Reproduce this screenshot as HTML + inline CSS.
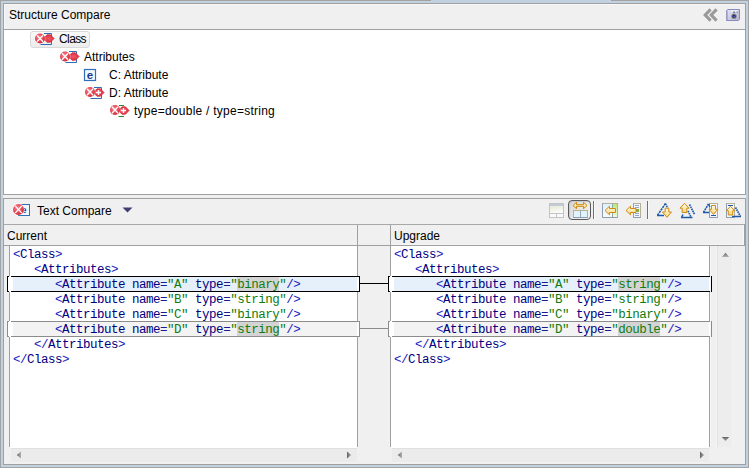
<!DOCTYPE html>
<html><head><meta charset="utf-8">
<style>
html,body{margin:0;padding:0}
body{width:749px;height:468px;position:relative;overflow:hidden;background:#c2d1df;font-family:"Liberation Sans",sans-serif;font-size:12px;color:#000}
.a{position:absolute}
.t{position:absolute;white-space:pre;line-height:12px}
.m{position:absolute;white-space:pre;font-family:"Liberation Mono",monospace;font-size:12.5px;letter-spacing:-0.5px;line-height:15px;height:15px;margin-top:2px}
.d{color:#2020c0}.e{color:#1a1a90}.n{color:#000080}.v{color:#107c10}
svg{position:absolute;overflow:visible}
</style></head><body>
<!-- outer frame -->
<div class="a" style="left:0;top:0;width:747px;height:466px;border:1px solid #a3a3a3"></div>
<div class="a" style="left:431px;top:0;width:180px;height:1px;background:#c2d1df"></div>

<!-- TOP PANE -->
<div class="a" style="left:3px;top:3px;width:741px;height:190px;border:1px solid #a0a0a0;background:#fff"></div>
<div class="a" style="left:4px;top:4px;width:741px;height:25px;background:#f0f0f0;border-bottom:1px solid #a0a0a0;width:741px"></div>
<div class="a" style="left:4px;top:4px;width:740px;height:1px;background:#f8f8f8"></div>
<div class="a" style="left:4px;top:4px;width:1px;height:25px;background:#f8f8f8"></div>
<div class="t" style="left:9px;top:9px">Structure Compare</div>


<!-- tree -->
<div class="a" style="left:30px;top:31px;width:58px;height:15px;border:1px solid #d9d9d9;border-radius:3px;background:linear-gradient(#fafafa,#ececec)"></div>
<svg width="0" height="0" style="left:0;top:0"><defs>
<radialGradient id="rg" cx="0.42" cy="0.38" r="0.7"><stop offset="0" stop-color="#f78a92"/><stop offset="0.65" stop-color="#e4404e"/><stop offset="1" stop-color="#c41c2a"/></radialGradient>
<radialGradient id="dg" cx="0.5" cy="0.5" r="0.6"><stop offset="0" stop-color="#f05868"/><stop offset="1" stop-color="#d82a3a"/></radialGradient>
<symbol id="xc" viewBox="-0.6 -0.6 11.2 11.2"><circle cx="5" cy="5" r="5.6" fill="#fff" opacity="0.85"/><circle cx="5" cy="5" r="5" fill="url(#rg)"/><path d="M1.9 1.7L8.1 8.3M8.1 1.7L1.9 8.3" stroke="#fff" stroke-width="1.25"/></symbol>
</defs></svg>
<svg style="left:35px;top:33px" width="20" height="12" viewBox="0 0 20 12">
<path d="M9 0.5H16.5V11.5H5.5" fill="none" stroke="#2e6db5" stroke-width="1"/>
<path d="M8.4 5.5L12 1.8L15.4 1.8L19.1 5.5L15.4 9.3L12 9.3Z" fill="url(#dg)" stroke="#d02432" stroke-width="0.7"/>
<use href="#xc" x="-0.6" y="-0.1" width="11.2" height="11.2"/>
</svg>
<svg style="left:60px;top:51px" width="20" height="12" viewBox="0 0 20 12">
<path d="M9 0.5H16.5V11.5H5.5" fill="none" stroke="#2e6db5" stroke-width="1"/>
<path d="M8.4 5.5L12 1.8L15.4 1.8L19.1 5.5L15.4 9.3L12 9.3Z" fill="url(#dg)" stroke="#d02432" stroke-width="0.7"/>
<use href="#xc" x="-0.6" y="-0.1" width="11.2" height="11.2"/>
</svg>
<svg style="left:84px;top:69px" width="12" height="12" viewBox="0 0 12 12">
<rect x="0.5" y="0.5" width="11" height="11" fill="#f2f9fe" stroke="#2f6fb8" stroke-width="1.2"/>
<text x="6" y="9.6" text-anchor="middle" font-family="Liberation Sans" font-weight="bold" font-size="11.5" fill="#1a3a98">e</text>
</svg>
<svg style="left:85px;top:87px" width="20" height="12" viewBox="0 0 20 12">
<path d="M9 0.5H16.5V11.5H5.5" fill="none" stroke="#2e6db5" stroke-width="1"/>
<path d="M8.4 5.5L12 1.8L15.4 1.8L19.1 5.5L15.4 9.3L12 9.3Z" fill="url(#dg)" stroke="#d02432" stroke-width="0.7"/>
<path d="M13.5 3V8M11 5.5H16" stroke="#fff" stroke-width="1.4"/>
<use href="#xc" x="-0.6" y="-0.6" width="11.2" height="11.2"/>
</svg>
<svg style="left:110px;top:105px" width="20" height="12" viewBox="0 0 20 12">
<path d="M9 0.5H14M8.5 11.5H14" fill="none" stroke="#2e8a2e" stroke-width="1"/>
<path d="M8.4 5.5L12 1.8L15.4 1.8L19.1 5.5L15.4 9.3L12 9.3Z" fill="url(#dg)" stroke="#d02432" stroke-width="0.7"/>
<path d="M13.5 3V8M11 5.5H16" stroke="#fff" stroke-width="1.4"/>
<use href="#xc" x="-0.6" y="-0.6" width="11.2" height="11.2"/>
</svg>
<div class="t" style="left:59px;top:33px;letter-spacing:-0.6px">Class</div>
<div class="t" style="left:84px;top:51px">Attributes</div>
<div class="t" style="left:109px;top:69px">C: Attribute</div>
<div class="t" style="left:109px;top:87px">D: Attribute</div>
<div class="t" style="left:134px;top:105px;letter-spacing:0.25px">type=double / type=string</div>

<!-- sash -->
<div class="a" style="left:3px;top:195px;width:743px;height:3px;background:#f0f0f0"></div>

<!-- BOTTOM PANE -->
<div class="a" style="left:3px;top:198px;width:741px;height:265px;border:1px solid #a0a0a0;background:#f0f0f0"></div>
<div class="a" style="left:4px;top:224px;width:741px;height:1px;background:#a8a8a8"></div>
<div class="t" style="left:37px;top:205px">Text Compare</div>
<div class="a" style="left:4px;top:245px;width:741px;height:1px;background:#a0a0a0"></div>
<div class="t" style="left:7px;top:230px">Current</div>
<div class="t" style="left:394px;top:230px">Upgrade</div>
<div class="a" style="left:744px;top:224px;width:1px;height:22px;background:#a0a0a0"></div>
<div class="a" style="left:743px;top:225px;width:1px;height:20px;background:#f8f8f8"></div>
<div class="a" style="left:391px;top:244px;width:352px;height:1px;background:#f6f6f6"></div>
<div class="a" style="left:357px;top:225px;width:1px;height:222px;background:#a0a0a0"></div>
<div class="a" style="left:390px;top:225px;width:1px;height:222px;background:#a0a0a0"></div>


<!-- top toolbar icons -->
<svg style="left:703px;top:8px" width="15" height="14" viewBox="0 0 15 14">
<path d="M7.6 1.4L2.2 7L7.6 12.6M13.6 1.4L8.2 7L13.6 12.6" fill="none" stroke="#9a9a9a" stroke-width="3.1" stroke-linejoin="miter"/>
</svg>
<svg style="left:725px;top:8px" width="16" height="14" viewBox="0 0 16 14">
<defs><linearGradient id="cam" x1="0" y1="0" x2="1" y2="1"><stop offset="0" stop-color="#e6e6f4"/><stop offset="1" stop-color="#b4b4d2"/></linearGradient></defs>
<path d="M1.5 2.5L2.5 1.5H14.5V11.5L13.5 12.5H1.5Z" fill="url(#cam)" stroke="#8a8ac0" stroke-width="1"/>
<path d="M2 2.5V12" stroke="#a0a0cc" stroke-width="1.4"/>
<path d="M6 3H13" stroke="#fafafa" stroke-width="1.2"/>
<circle cx="9" cy="8.3" r="2.8" fill="#8c8c98"/>
<circle cx="9" cy="8.3" r="1.8" fill="#2c2c58"/>
<circle cx="9.2" cy="8.5" r="0.8" fill="#6a6ad0"/>
<rect x="8.4" y="3.6" width="1.4" height="1.2" fill="#404050"/>
<rect x="11.6" y="3.6" width="1.6" height="1" fill="#707088"/>
</svg>

<!-- text compare toolbar -->
<svg style="left:12px;top:203px" width="19" height="14" viewBox="0 0 19 14">
<rect x="6.5" y="1.5" width="11" height="11" fill="#f0f8fe" stroke="#2f6fb8"/>
<text x="12" y="10" text-anchor="middle" font-family="Liberation Sans" font-weight="bold" font-size="9" fill="#1d3f9e">e</text>
<use href="#xc" x="0.4" y="0.4" width="12.2" height="12.2"/>
</svg>
<svg style="left:122px;top:207px" width="11" height="6" viewBox="0 0 11 6"><path d="M0.5 0.5H10.5L5.5 5.5Z" fill="#404070"/></svg>

<!-- right toolbar -->
<svg style="left:549px;top:203px" width="15" height="15" viewBox="0 0 15 15">
<defs><linearGradient id="dis" x1="0" y1="0" x2="0.3" y2="1"><stop offset="0" stop-color="#e6ead4"/><stop offset="1" stop-color="#fbfbf8"/></linearGradient></defs>
<rect x="0.5" y="0.5" width="14" height="14" fill="#f8fafc" stroke="#c4c4c4"/>
<rect x="1" y="1" width="13" height="2" fill="#c4ccd8"/>
<rect x="1" y="3" width="13" height="7" fill="url(#dis)"/>
<path d="M0.5 10.5H14.5M7.5 10.5V14.5" stroke="#c4c4c4"/>
</svg>
<div class="a" style="left:568px;top:200px;width:21px;height:18px;border:1px solid #5a5a5a;border-radius:4px;box-shadow:inset 1px 1px 1px #c8c8c8;background:linear-gradient(135deg,#d6d6d6,#f6f6f6)"></div>
<svg style="left:572px;top:202px" width="16" height="16" viewBox="0 0 16 16">
<path d="M1 3.5L4.5 0.3V2.7H11.5V0.3L15 3.5L11.5 6.7V4.3H4.5V6.7Z" fill="url(#ar)" stroke="#d08a10" stroke-width="1" stroke-linejoin="round"/>
<rect x="1.5" y="8.5" width="14" height="7" fill="#dff4fd" stroke="#b8b090"/>
<path d="M8.5 9V15.5" stroke="#9aa8b8"/>
<path d="M1.5 15.5H15.5" stroke="#8a9cb8"/>
</svg>
<div class="a" style="left:593px;top:201px;width:1px;height:18px;background:#707070;box-shadow:1px 0 0 #fafafa"></div>
<svg style="left:600px;top:200px" width="20" height="20" viewBox="0 0 20 20">
<defs><linearGradient id="lb" x1="0" y1="0" x2="0" y2="1"><stop offset="0" stop-color="#dcf2fd"/><stop offset="1" stop-color="#f8fcf4"/></linearGradient>
<linearGradient id="gr" x1="0" y1="0" x2="0" y2="1"><stop offset="0" stop-color="#bde87a"/><stop offset="1" stop-color="#eef8dc"/></linearGradient>
<linearGradient id="ar" x1="0" y1="0" x2="0" y2="1"><stop offset="0" stop-color="#fffbe6"/><stop offset="1" stop-color="#f6d77c"/></linearGradient>
<linearGradient id="arh" x1="0" y1="0" x2="1" y2="0"><stop offset="0" stop-color="#fffbe6"/><stop offset="1" stop-color="#f6d77c"/></linearGradient></defs>
<rect x="2.5" y="3.5" width="15" height="14" fill="url(#lb)" stroke="#b4b09a"/>
<path d="M2.5 3.5V17.5H17.5" fill="none" stroke="#8e9cb4"/>
<rect x="13" y="4" width="4" height="13" fill="url(#gr)"/><path d="M12.5 4V17" stroke="#8fa8a0"/>
<path d="M5 10.5L9.5 6.2V8.5H15.5V12.5H9.5V14.8Z" fill="url(#ar)" stroke="#cf8a14" stroke-width="1" stroke-linejoin="round"/>
</svg>
<svg style="left:623px;top:200px" width="20" height="20" viewBox="0 0 20 20">
<rect x="10.5" y="3.5" width="7" height="14" fill="#f2f6fc" stroke="#b4b09a"/>
<path d="M10.5 3.5V17.5H17.5" fill="none" stroke="#8e9cb4"/>
<path d="M12 5.5H16M12 7.5H16M12 13.5H16M12 15.5H16" stroke="#98a4cc"/>
<rect x="13" y="9" width="3" height="3" fill="#7cb040"/>
<path d="M3 10.5L7.5 6.2V8.5H13V12.5H7.5V14.8Z" fill="url(#ar)" stroke="#cf8a14" stroke-width="1" stroke-linejoin="round"/>
</svg>
<div class="a" style="left:647px;top:201px;width:1px;height:18px;background:#707070;box-shadow:1px 0 0 #fafafa"></div>
<svg style="left:654px;top:200px" width="20" height="20" viewBox="0 0 20 20">
<path d="M3.5 15.3L11.5 3.5" fill="none" stroke="#1e5aa8" stroke-width="1.6" stroke-dasharray="2.2 0.8"/>
<path d="M11.5 3.5L13.8 8.5" fill="none" stroke="#1e5aa8" stroke-width="1.5" stroke-dasharray="1.6 0.8"/>
<path d="M3 15.5H10" stroke="#1e5aa8" stroke-width="1.5"/>
<path d="M11.2 8.2H14.8V12H17.5L13 17.3L8.5 12H11.2Z" fill="url(#ar)" stroke="#cf8a14" stroke-width="1" stroke-linejoin="round"/>
</svg>
<svg style="left:677px;top:200px" width="20" height="20" viewBox="0 0 20 20">
<path d="M12.5 4.5L17.5 14.3" fill="none" stroke="#1e5aa8" stroke-width="1.7" stroke-dasharray="1.6 0.7"/>
<path d="M11 11L14 17" fill="none" stroke="#1e5aa8" stroke-width="1.7" stroke-dasharray="1.6 0.7"/>
<path d="M4 17.5H15.5M4.5 17.5L6 14.5" fill="none" stroke="#1e5aa8" stroke-width="1.5"/>
<path d="M7.5 3.3L12 8.2H9.8V12.5H5.2V8.2H3Z" fill="url(#ar)" stroke="#cf8a14" stroke-width="1" stroke-linejoin="round"/>
</svg>
<svg style="left:700px;top:200px" width="20" height="20" viewBox="0 0 20 20">
<rect x="9.5" y="3.5" width="8" height="14" fill="#f2f6fc" stroke="#b4b09a"/>
<path d="M9.5 3.5V17.5H17.5" fill="none" stroke="#8e9cb4"/>
<path d="M3.5 12.5L8.5 3.8" fill="none" stroke="#1e5aa8" stroke-width="1.6" stroke-dasharray="2 0.7"/>
<path d="M8.5 4L9.8 7" fill="none" stroke="#1e5aa8" stroke-width="1.4"/>
<path d="M3 12.5H9" stroke="#1e5aa8" stroke-width="1.5"/>
<path d="M11 15.5H16" stroke="#1e5aa8" stroke-width="1"/>
<path d="M11.5 5.5H15.5V9.3H17.8L13.5 14.5L9.2 9.3H11.5Z" fill="url(#ar)" stroke="#cf8a14" stroke-width="1" stroke-linejoin="round"/>
</svg>
<svg style="left:723px;top:200px" width="20" height="20" viewBox="0 0 20 20">
<rect x="3.5" y="3.5" width="8" height="14" fill="#f2f6fc" stroke="#b4b09a"/>
<path d="M3.5 3.5V17.5H11.5" fill="none" stroke="#8e9cb4"/>
<path d="M5 5.5H10" stroke="#1e5aa8" stroke-width="1"/>
<path d="M12.5 7.5L17.5 16.5" fill="none" stroke="#1e5aa8" stroke-width="1.7" stroke-dasharray="1.6 0.7"/>
<path d="M9 16.5H18" stroke="#1e5aa8" stroke-width="1.5"/>
<path d="M7.5 6.3L11.8 10.8H9.7V15H5.3V10.8H3.2Z" fill="url(#ar)" stroke="#cf8a14" stroke-width="1" stroke-linejoin="round"/>
</svg>

<!-- left text pane -->
<div class="a" style="left:10px;top:246px;width:347px;height:202px;background:#fff"></div>
<div class="a" style="left:9px;top:246px;width:1px;height:201px;background:#a0a0a0"></div>
<!-- right text pane -->
<div class="a" style="left:391px;top:246px;width:318px;height:202px;background:#fff"></div>
<div class="a" style="left:709px;top:246px;width:1px;height:201px;background:#a0a0a0"></div>


<!-- diff boxes -->
<div class="a" style="left:13px;top:277px;width:346px;height:14px;background:#e6f0fb"></div>
<div class="a" style="left:7px;top:276px;width:351px;height:14px;border:1px solid #000;border-left-width:1px"></div>
<div class="a" style="left:9px;top:276px;width:2px;height:1px;background:#fff"></div>
<div class="a" style="left:9px;top:291px;width:2px;height:1px;background:#fff"></div>
<div class="a" style="left:8px;top:277px;width:5px;height:14px;background:#fff"></div>
<div class="a" style="left:357px;top:277px;width:2px;height:14px;background:#fff"></div>
<div class="a" style="left:360px;top:283px;width:28px;height:1px;background:#000"></div>
<div class="a" style="left:394px;top:277px;width:315px;height:14px;background:#e6f0fb"></div>
<div class="a" style="left:388px;top:276px;width:322px;height:14px;border:1px solid #000"></div>
<div class="a" style="left:390px;top:276px;width:2px;height:1px;background:#fff"></div>
<div class="a" style="left:390px;top:291px;width:2px;height:1px;background:#fff"></div>
<div class="a" style="left:389px;top:277px;width:5px;height:14px;background:#fff"></div>
<div class="a" style="left:709px;top:277px;width:2px;height:14px;background:#fff"></div>

<div class="a" style="left:13px;top:322px;width:346px;height:14px;background:#f3f3f3"></div>
<div class="a" style="left:7px;top:321px;width:351px;height:14px;border:1px solid #8c8c8c"></div>
<div class="a" style="left:9px;top:321px;width:2px;height:1px;background:#fff"></div>
<div class="a" style="left:9px;top:336px;width:2px;height:1px;background:#fff"></div>
<div class="a" style="left:8px;top:322px;width:5px;height:14px;background:#fff"></div>
<div class="a" style="left:357px;top:322px;width:2px;height:14px;background:#fff"></div>
<div class="a" style="left:360px;top:328px;width:28px;height:1px;background:#8c8c8c"></div>
<div class="a" style="left:394px;top:322px;width:315px;height:14px;background:#f3f3f3"></div>
<div class="a" style="left:388px;top:321px;width:322px;height:14px;border:1px solid #8c8c8c"></div>
<div class="a" style="left:390px;top:321px;width:2px;height:1px;background:#fff"></div>
<div class="a" style="left:390px;top:336px;width:2px;height:1px;background:#fff"></div>
<div class="a" style="left:389px;top:322px;width:5px;height:14px;background:#fff"></div>
<div class="a" style="left:709px;top:322px;width:2px;height:14px;background:#fff"></div>

<!-- word highlights -->
<div class="a" style="left:237px;top:277px;width:42px;height:14px;background:#d4d4d4"></div>
<div class="a" style="left:237px;top:322px;width:42px;height:14px;background:#d4d4d4"></div>
<div class="a" style="left:618px;top:277px;width:42px;height:14px;background:#d4d4d4"></div>
<div class="a" style="left:618px;top:322px;width:42px;height:14px;background:#d4d4d4"></div>

<!-- code right -->
<div class="m" style="left:394px;top:246px"><span class="d">&lt;</span><span class="n">Class</span><span class="d">&gt;</span></div>
<div class="m" style="left:394px;top:261px">   <span class="d">&lt;</span><span class="n">Attributes</span><span class="d">&gt;</span></div>
<div class="m" style="left:394px;top:276px">      <span class="d">&lt;</span><span class="n">Attribute name</span><span class="e">=</span><span class="v">"A"</span> <span class="n">type</span><span class="e">=</span><span class="v">"string"</span><span class="d">/&gt;</span></div>
<div class="m" style="left:394px;top:291px">      <span class="d">&lt;</span><span class="n">Attribute name</span><span class="e">=</span><span class="v">"B"</span> <span class="n">type</span><span class="e">=</span><span class="v">"string"</span><span class="d">/&gt;</span></div>
<div class="m" style="left:394px;top:306px">      <span class="d">&lt;</span><span class="n">Attribute name</span><span class="e">=</span><span class="v">"C"</span> <span class="n">type</span><span class="e">=</span><span class="v">"binary"</span><span class="d">/&gt;</span></div>
<div class="m" style="left:394px;top:321px">      <span class="d">&lt;</span><span class="n">Attribute name</span><span class="e">=</span><span class="v">"D"</span> <span class="n">type</span><span class="e">=</span><span class="v">"double"</span><span class="d">/&gt;</span></div>
<div class="m" style="left:394px;top:336px">   <span class="d">&lt;/</span><span class="n">Attributes</span><span class="d">&gt;</span></div>
<div class="m" style="left:394px;top:351px"><span class="d">&lt;/</span><span class="n">Class</span><span class="d">&gt;</span></div>

<!-- scrollbars -->
<div class="a" style="left:11px;top:448px;width:346px;height:15px;background:#ebebeb;border-top:1px solid #e0e0e0;box-sizing:border-box;border-bottom:1px solid #f2f2f2"></div>
<svg style="left:16px;top:451px" width="6" height="8" viewBox="0 0 6 8"><defs><linearGradient id="agl" x1="0" y1="0" x2="1" y2="0"><stop offset="0" stop-color="#606060"/><stop offset="1" stop-color="#b4b4b4"/></linearGradient><linearGradient id="agr" x1="0" y1="0" x2="1" y2="0"><stop offset="0" stop-color="#606060"/><stop offset="1" stop-color="#b4b4b4"/></linearGradient><linearGradient id="agu" x1="0" y1="0" x2="0" y2="1"><stop offset="0" stop-color="#606060"/><stop offset="1" stop-color="#b4b4b4"/></linearGradient><linearGradient id="agd" x1="0" y1="0" x2="0" y2="1"><stop offset="0" stop-color="#606060"/><stop offset="1" stop-color="#b4b4b4"/></linearGradient></defs><path d="M5 0.5V7.5L0.8 4Z" fill="url(#agl)"/></svg>
<svg style="left:346px;top:451px" width="6" height="8" viewBox="0 0 6 8"><path d="M1 0.5V7.5L5.2 4Z" fill="url(#agr)"/></svg>
<div class="a" style="left:392px;top:448px;width:317px;height:15px;background:#ebebeb;border-top:1px solid #e0e0e0;box-sizing:border-box;border-bottom:1px solid #f2f2f2"></div>
<svg style="left:397px;top:451px" width="6" height="8" viewBox="0 0 6 8"><path d="M5 0.5V7.5L0.8 4Z" fill="url(#agl)"/></svg>
<svg style="left:699px;top:451px" width="6" height="8" viewBox="0 0 6 8"><path d="M1 0.5V7.5L5.2 4Z" fill="url(#agr)"/></svg>
<div class="a" style="left:716px;top:246px;width:17px;height:201px;background:#ededed;border-left:1px solid #f6f6f6;box-shadow:inset 1px 0 0 #e2e2e2;box-sizing:border-box;border-right:1px solid #f2f2f2"></div>
<div class="a" style="left:710px;top:246px;width:1px;height:201px;background:#f6f6f6"></div>
<svg style="left:721px;top:252px" width="9" height="6" viewBox="0 0 9 6"><path d="M0.8 5H8.2L4.5 0.8Z" fill="url(#agu)"/></svg>
<svg style="left:721px;top:436px" width="9" height="6" viewBox="0 0 9 6"><path d="M0.8 1H8.2L4.5 5.2Z" fill="url(#agd)"/></svg>

<!-- code left -->
<div class="m" style="left:13px;top:246px"><span class="d">&lt;</span><span class="n">Class</span><span class="d">&gt;</span></div>
<div class="m" style="left:13px;top:261px">   <span class="d">&lt;</span><span class="n">Attributes</span><span class="d">&gt;</span></div>
<div class="m" style="left:13px;top:276px">      <span class="d">&lt;</span><span class="n">Attribute name</span><span class="e">=</span><span class="v">"A"</span> <span class="n">type</span><span class="e">=</span><span class="v">"binary"</span><span class="d">/&gt;</span></div>
<div class="m" style="left:13px;top:291px">      <span class="d">&lt;</span><span class="n">Attribute name</span><span class="e">=</span><span class="v">"B"</span> <span class="n">type</span><span class="e">=</span><span class="v">"string"</span><span class="d">/&gt;</span></div>
<div class="m" style="left:13px;top:306px">      <span class="d">&lt;</span><span class="n">Attribute name</span><span class="e">=</span><span class="v">"C"</span> <span class="n">type</span><span class="e">=</span><span class="v">"binary"</span><span class="d">/&gt;</span></div>
<div class="m" style="left:13px;top:321px">      <span class="d">&lt;</span><span class="n">Attribute name</span><span class="e">=</span><span class="v">"D"</span> <span class="n">type</span><span class="e">=</span><span class="v">"string"</span><span class="d">/&gt;</span></div>
<div class="m" style="left:13px;top:336px">   <span class="d">&lt;/</span><span class="n">Attributes</span><span class="d">&gt;</span></div>
<div class="m" style="left:13px;top:351px"><span class="d">&lt;/</span><span class="n">Class</span><span class="d">&gt;</span></div>

</body></html>
